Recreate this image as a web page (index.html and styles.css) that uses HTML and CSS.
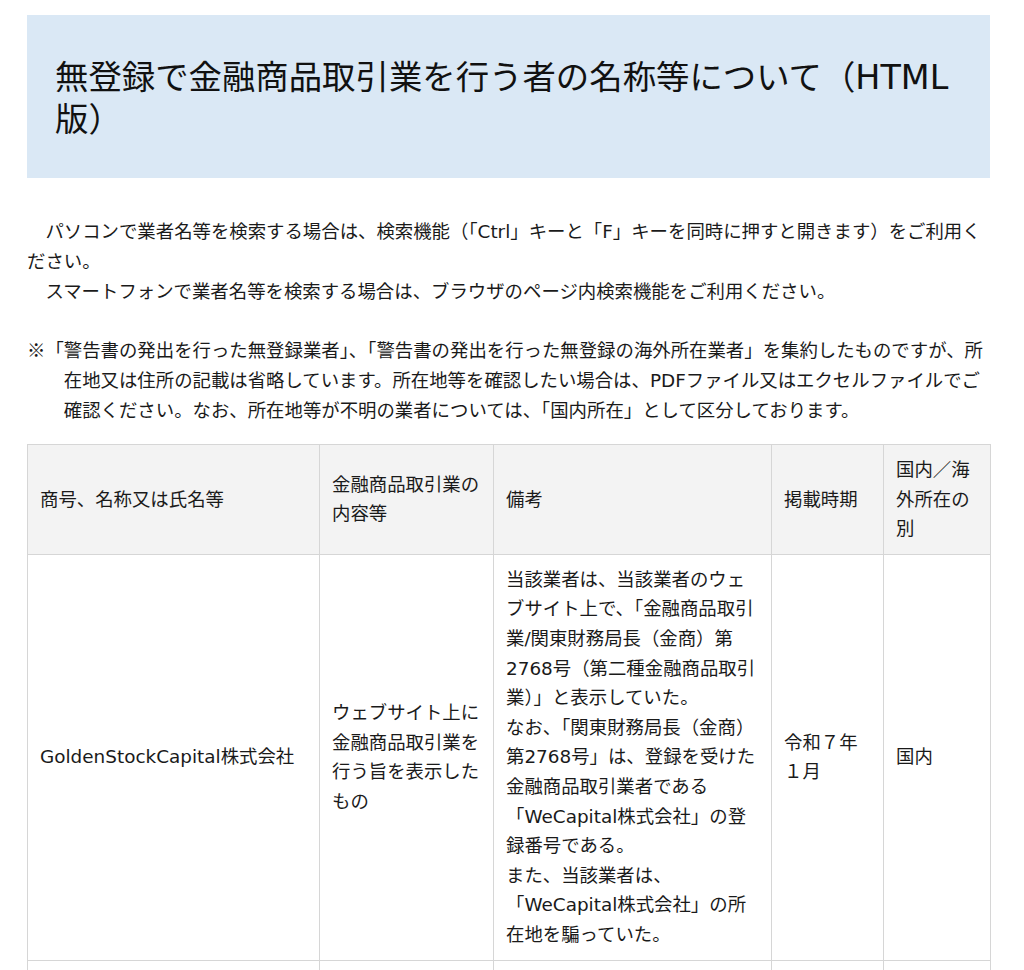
FILE: index.html
```html
<!DOCTYPE html>
<html lang="ja">
<head>
<meta charset="utf-8">
<title>無登録で金融商品取引業を行う者の名称等について（HTML版）</title>
<link rel="stylesheet" href="styles.css">
</head>
<body>
<main class="page">
  <h1 class="title">無登録で金融商品取引業を行う者の名称等について（HTML版）</h1>

  <div class="intro">
    <p>　パソコンで業者名等を検索する場合は、検索機能（「Ctrl」キーと「F」キーを同時に押すと開きます）をご利用ください。</p>
    <p>　スマートフォンで業者名等を検索する場合は、ブラウザのページ内検索機能をご利用ください。</p>
  </div>

  <p class="note"><span class="mark">※</span>「警告書の発出を行った無登録業者」、「警告書の発出を行った無登録の海外所在業者」を集約したものですが、所在地又は住所の記載は省略しています。所在地等を確認したい場合は、PDFファイル又はエクセルファイルでご確認ください。なお、所在地等が不明の業者については、「国内所在」として区分しております。</p>

  <table class="list">
    <colgroup>
      <col class="c-name">
      <col class="c-kind">
      <col class="c-note">
      <col class="c-date">
      <col class="c-loc">
    </colgroup>
    <thead>
      <tr>
        <th>商号、名称又は氏名等</th>
        <th>金融商品取引業の内容等</th>
        <th>備考</th>
        <th>掲載時期</th>
        <th>国内／海外所在の別</th>
      </tr>
    </thead>
    <tbody>
      <tr>
        <td>GoldenStockCapital株式会社</td>
        <td>ウェブサイト上に金融商品取引業を行う旨を表示したもの</td>
        <td>当該業者は、当該業者のウェブサイト上で、「金融商品取引業/関東財務局長（金商）第2768号（第二種金融商品取引業）」と表示していた。<br>なお、「関東財務局長（金商）第2768号」は、登録を受けた金融商品取引業者である「WeCapital株式会社」の登録番号である。<br>また、当該業者は、「WeCapital株式会社」の所在地を騙っていた。</td>
        <td>令和７年１月</td>
        <td>国内</td>
      </tr>
      <tr class="empty">
        <td></td><td></td><td></td><td></td><td></td>
      </tr>
    </tbody>
  </table>
</main>
</body>
</html>
```

FILE: styles.css
```css
html, body {
  margin: 0;
  padding: 0;
  background: #ffffff;
}

body {
  font-family: "DejaVu Sans", "Noto Sans CJK JP", sans-serif;
  color: #1a1a1a;
  font-size: 18.4px;
  line-height: 30px;
}

.page {
  width: 963px;
  margin: 0 0 0 27px;
  padding-top: 15px;
}

.title {
  margin: 0;
  background: #dae8f5;
  padding: 42px 28px 37px;
  font-size: 33.4px;
  font-weight: 400;
  line-height: 42px;
  color: #111;
}

.intro {
  margin-top: 39px;
}

.intro p {
  margin: 0;
}

.note {
  margin: 27px 0 0;
  padding-left: 2em;
  text-indent: -2em;
}

.mark {
  font-family: "Noto Sans CJK JP", sans-serif;
}

.list {
  margin-top: 18px;
  width: 963px;
  border-collapse: collapse;
  table-layout: fixed;
  line-height: 29.6px;
}

.c-name { width: 292px; }
.c-kind { width: 174px; }
.c-note { width: 278px; }
.c-date { width: 112px; }
.c-loc  { width: 107px; }

.list th,
.list td {
  border: 1px solid #d6d6d6;
  padding: 10px 12px;
  text-align: left;
  vertical-align: middle;
  font-weight: 400;
}

.list th {
  background: #f3f3f3;
}

.list .empty td {
  height: 40px;
}
```
